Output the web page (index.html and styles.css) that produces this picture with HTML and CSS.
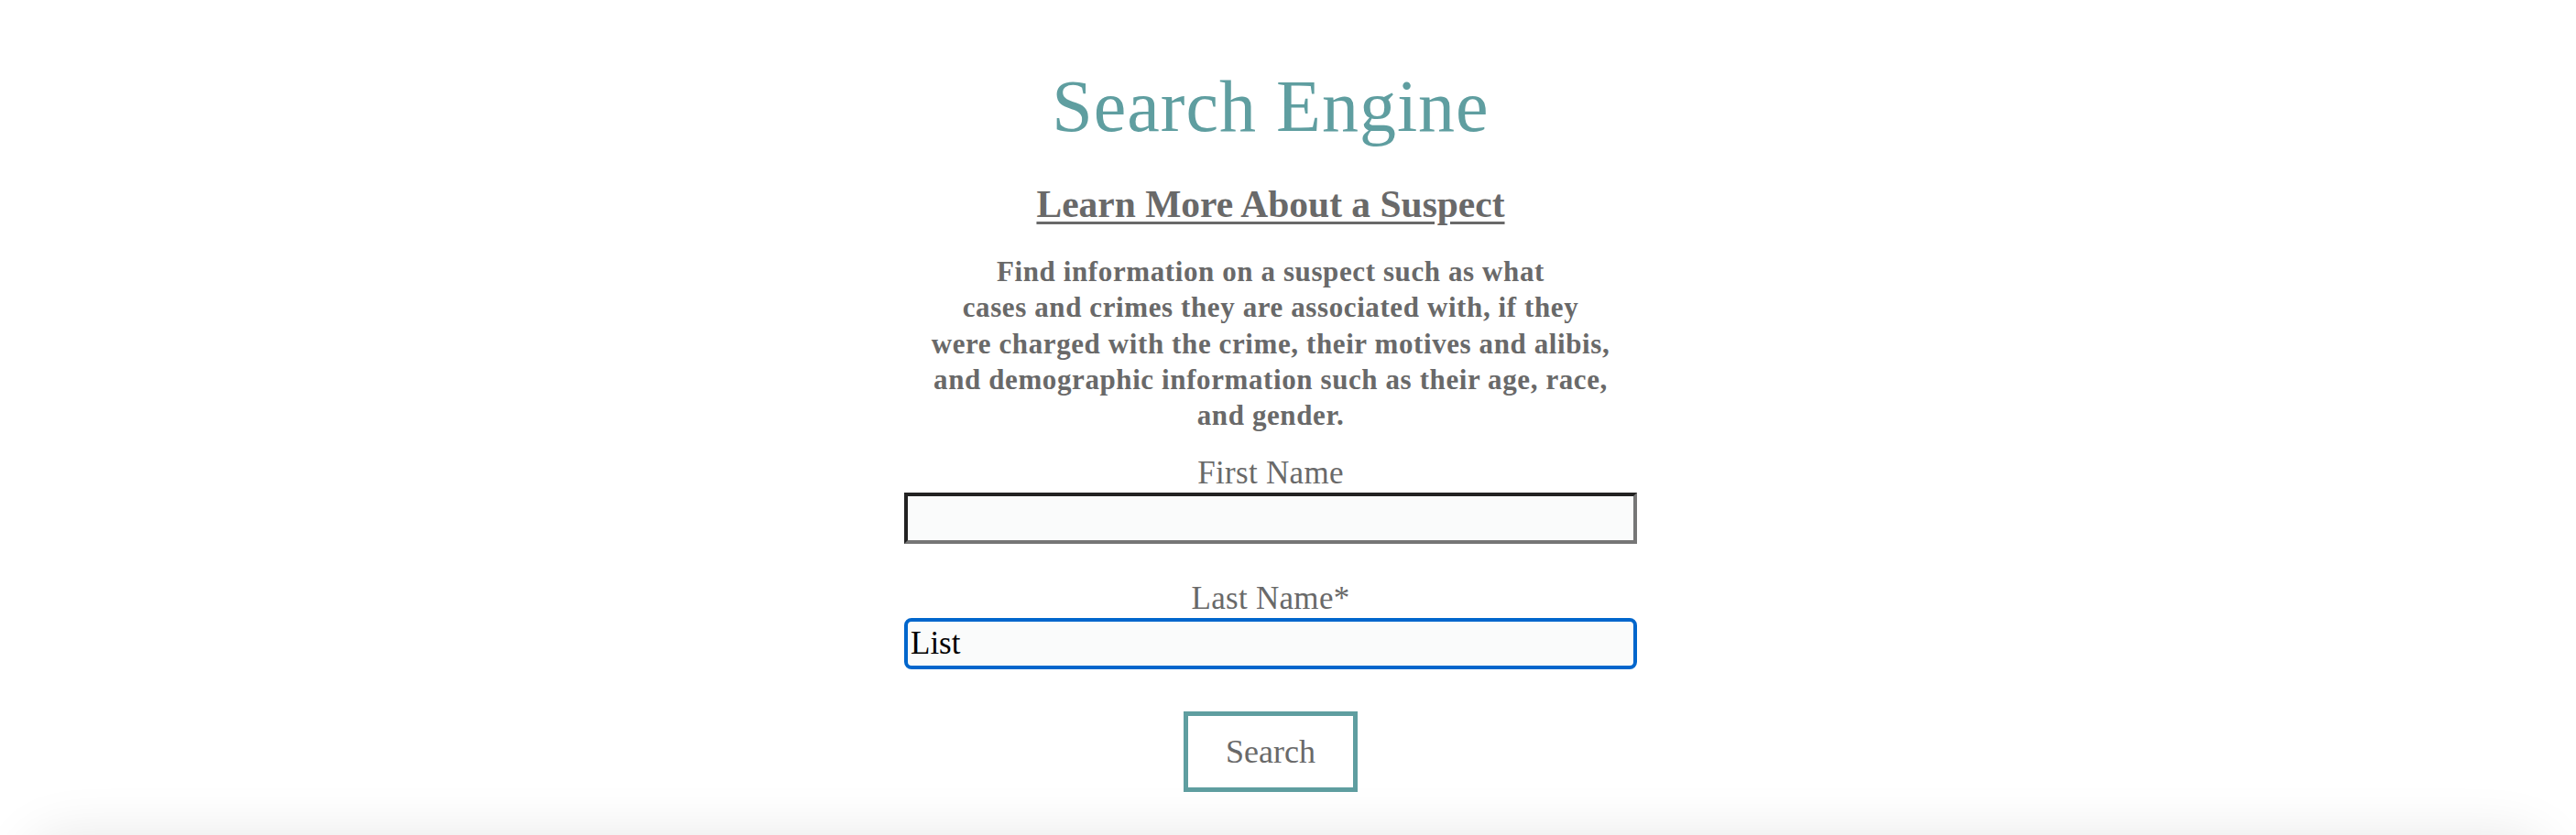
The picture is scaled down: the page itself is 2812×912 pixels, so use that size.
FILE: index.html
```html
<!DOCTYPE html>
<html lang="en">
<head>
<meta charset="utf-8">
<title>Search Engine</title>
<link rel="stylesheet" href="styles.css">
</head>
<body>
<main class="page">
  <h1 class="title">Search Engine</h1>
  <h2 class="subtitle">Learn More About a Suspect</h2>
  <p class="intro">Find information on a suspect such as what<br>cases and crimes they are associated with, if they<br>were charged with the crime, their motives and alibis,<br>and demographic information such as their age, race,<br>and gender.</p>
  <form class="form">
    <label class="label" for="first">First Name</label>
    <input class="field field-plain" id="first" type="text">
    <label class="label label-last" for="last">Last Name*</label>
    <input class="field field-focus" id="last" type="text" value="List">
    <button class="btn" type="button">Search</button>
  </form>
  <div class="footer-card"></div>
</main>
</body>
</html>
```
FILE: styles.css
```css
html, body {
  margin: 0;
  padding: 0;
  background: #ffffff;
}
body {
  font-family: "Liberation Serif", "Times New Roman", serif;
  color: #696969;
}
.page {
  box-sizing: border-box;
  display: flex;
  flex-direction: column;
  align-items: center;
  padding-top: 70px;
  padding-right: 38px;
}
.title {
  margin: 0;
  font-size: 80px;
  line-height: 92px;
  font-weight: normal;
  letter-spacing: 1px;
  color: #5f9ea0;
}
.subtitle {
  margin: 37px 0 0;
  font-size: 41.5px;
  line-height: 48px;
  font-weight: bold;
  text-decoration: underline;
  text-decoration-thickness: 3px;
  text-underline-offset: 5px;
  color: #696969;
}
.intro {
  margin: 30px 0 0;
  font-size: 31px;
  line-height: 39.3px;
  letter-spacing: 0.6px;
  font-weight: bold;
  text-align: center;
  color: #696969;
}
.form {
  display: flex;
  flex-direction: column;
  align-items: center;
  margin-top: 23px;
}
.label {
  font-size: 35px;
  line-height: 42px;
  letter-spacing: 0.3px;
  color: #696969;
}
.label-last {
  margin-top: 39px;
}
.field {
  box-sizing: border-box;
  width: 800px;
  height: 56px;
  margin: 0;
  padding: 0 3px;
  background: #fafbfb;
  font-family: "Liberation Serif", "Times New Roman", serif;
  font-size: 35px;
  color: #000000;
  outline: none;
}
.field-plain {
  border-width: 4px;
  border-style: solid;
  border-color: #222222 #767676 #767676 #222222;
  border-radius: 0;
}
.field-focus {
  border: 4px solid #0066cc;
  border-radius: 8px;
}
.btn {
  box-sizing: border-box;
  margin-top: 46px;
  width: 190px;
  height: 88px;
  border: 5px solid #5f9ea0;
  background: #ffffff;
  font-family: "Liberation Serif", "Times New Roman", serif;
  font-size: 36px;
  color: #696969;
  cursor: pointer;
}
.footer-card {
  align-self: stretch;
  margin: 48px -8px 0 30px;
  height: 200px;
  border-radius: 40px;
  background: #ffffff;
  box-shadow: 0 0 60px rgba(0, 0, 0, 0.1);
}
```
